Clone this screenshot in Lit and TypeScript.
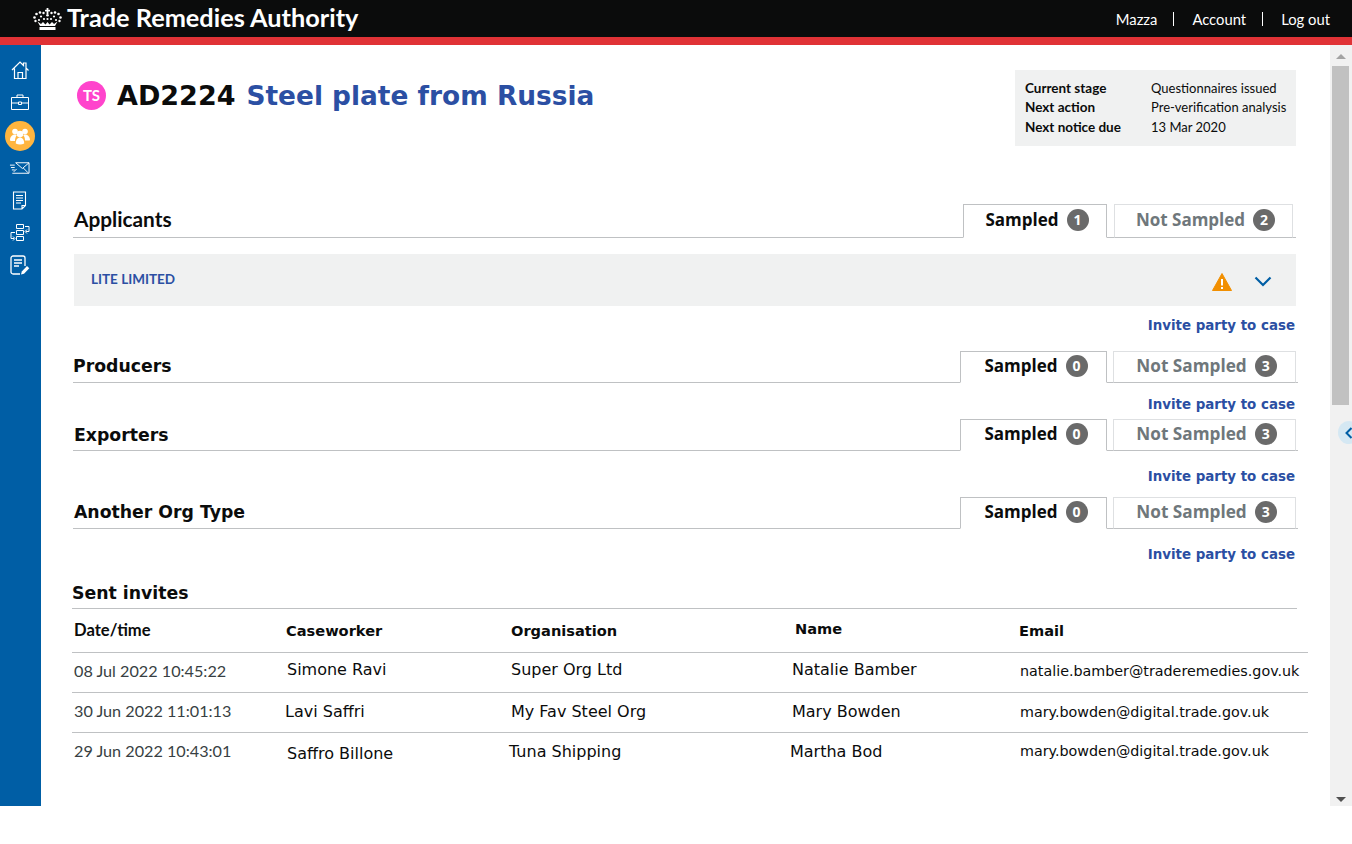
import { LitElement, html, css, svg, unsafeCSS } from 'lit';
import { customElement } from 'lit/decorators.js';

const TRANSPORT = unsafeCSS(`Lato, "Noto Sans", sans-serif`);

const home = svg`<path d="M2 10.500 10 2.500l3.500 3.500V3.500h2.500V8.500L18.500 11M4.500 9v10h11.500V9M8 19v-6h4.500v6" fill="none" stroke="#fff" stroke-width="1.200"/>`;
const briefcase = svg`<path d="M1.500 5.500h17v12h-17zM1.500 11h7M11.500 11h7M7 5.500V3h6v2.500M8.500 10h3v2.500h-3z" fill="none" stroke="#fff" stroke-width="1"/>`;
const people = svg`<g fill="#fff"><circle cx="6" cy="5.500" r="2.800"/><circle cx="16" cy="5.500" r="2.800"/><circle cx="11" cy="8" r="3.300"/><path d="M1 14c0-3 2-5.500 5-5.500 1 0 1.500.3 1.800.6C6.500 11 6 13 6 15H1.500zM21 14c0-3-2-5.500-5-5.500-1 0-1.500.3-1.800.6 1.300 1.400 1.800 3.400 1.800 5.400h4.500zM6.800 17.500c0-3.800 1.800-6 4.200-6s4.200 2.200 4.200 6c-2.500 1.200-5.900 1.200-8.400 0z"/></g>`;
const mail = svg`<path d="M7 1.500h14v11H3.500M7 1.500l7 6 7-6M8 8l-3 3M20 12l-5-5M1 4h5M2 6.500h4M3 9h3" fill="none" stroke="#fff" stroke-width="1"/>`;
const doc = svg`<path d="M1.500 1h12v13.500L10 18H1.500zM13.500 14.500H10V18M4 4.500h7M4 7h7M4 9.500h7M4 12h5" fill="none" stroke="#fff" stroke-width="1.100"/>`;
const flow = svg`<path d="M7.500 1h7v4h-7zM7.500 7h7v4h-7zM7.500 13h7v4h-7zM16 3h4v5h-3M18 6l-2 2 2 2M6 9H2v6h3M4 13l2 2-2 2" fill="none" stroke="#fff" stroke-width="1"/>`;
const note = svg`<path d="M10 19H3c-1 0-2-1-2-2V3c0-1 1-2 2-2h10c1 0 2 1 2 2v8M4 5h8M4 8h8M4 11h5" fill="none" stroke="#fff" stroke-width="1.300"/><path d="M11 19.500l.8-3 5.200-5.500 2.300 2.300-5.300 5.400z" fill="#fff"/>`;

const navIcons = [
  { art: home, w: 20, h: 22, box: '0 0 20 21', cls: 'n-home' },
  { art: briefcase, w: 20, h: 20, box: '0 0 20 20', cls: 'n-case' },
  { art: people, w: 22, h: 20, box: '0 0 22 20', cls: 'n-people' },
  { art: mail, w: 21, h: 14, box: '0 0 22 14', cls: 'n-mail' },
  { art: doc, w: 15, h: 19, box: '0 0 15 19', cls: 'n-doc' },
  { art: flow, w: 21, h: 20, box: '0 0 21 19', cls: 'n-flow' },
  { art: note, w: 20, h: 20, box: '0 0 20 20', cls: 'n-note' },
];

const groups = [
  { title: 'Applicants', sampled: 1, not: 2, cls: 'applicants', expanded: true },
  { title: 'Producers', sampled: 0, not: 3, cls: 'producers' },
  { title: 'Exporters', sampled: 0, not: 3, cls: 'exporters' },
  { title: 'Another Org Type', sampled: 0, not: 3, cls: 'another' },
];

// text, then the small x / y nudge each cell has in the original table
const invites = [
  [['08 Jul 2022 10:45:22', 1, -2], ['Simone Ravi', 1, -3], ['Super Org Ltd', 0, -3], ['Natalie Bamber', -3, -3], ['natalie.bamber@traderemedies.gov.uk', 1, -2]],
  [['30 Jun 2022 11:01:13', 1, -2], ['Lavi Saffri', -1, -1], ['My Fav Steel Org', 0, -1], ['Mary Bowden', -3, -1], ['mary.bowden@digital.trade.gov.uk', 1, -1]],
  [['29 Jun 2022 10:43:01', 1, -3], ['Saffro Billone', 1, 0], ['Tuna Shipping', -2, -2], ['Martha Bod', -5, -2], ['mary.bowden@digital.trade.gov.uk', 1, -2]],
] as [string, number, number][][];

@customElement('app-root')
export class AppRoot extends LitElement {
  static styles = css`
    :host {
      display: block;
      height: 806px;
      background: #fff;
      color: #0b0c0c;
      font-family: "DejaVu Sans", sans-serif;
    }
    .topbar {
      height: 37px;
      background: #0b0c0c;
      border-bottom: 8px solid #e03236;
      display: flex;
      align-items: center;
      justify-content: space-between;
      padding: 0 22px 0 33px;
      color: #fff;
      font-family: ${TRANSPORT};
    }
    .brand {
      display: flex;
      align-items: center;
      gap: 5px;
      font-size: 25.300px;
      font-weight: 700;
    }
    .brand span { padding-bottom: 3px; }
    .user {
      display: flex;
      align-items: center;
      font-size: 14.800px;
    }
    .user span + span {
      border-left: 1px solid #fff;
      margin-left: 16px;
      padding-left: 18px;
      line-height: 14px;
    }
    .layout {
      display: flex;
      height: 761px;
      position: relative;
    }
    .sidenav {
      width: 41px;
      flex: none;
      background: #005ea5;
      display: flex;
      flex-direction: column;
      align-items: center;
      padding-top: 14px;
      box-sizing: border-box;
    }
    .sidenav div {
      display: flex;
      align-items: center;
      justify-content: center;
      width: 30px;
      height: 22px;
      margin-left: -2px;
    }
    .sidenav .n-case { margin-top: 10px; }
    .sidenav .n-people {
      width: 30px;
      height: 30px;
      margin-top: 8px;
      border-radius: 50%;
      background: #ffb53f;
    }
    .sidenav .n-mail { margin-top: 9px; height: 16px; }
    .sidenav .n-doc { margin-top: 13px; }
    .sidenav .n-flow { margin-top: 11px; }
    .sidenav .n-note { margin-top: 10px; }
    main {
      flex: 1;
      min-width: 0;
      padding: 25px 22px 0 32px;
      box-sizing: border-box;
    }
    .case-head {
      display: flex;
      justify-content: space-between;
      align-items: flex-start;
      margin-left: 1px;
      margin-right: 12px;
      height: 133px;
    }
    .title {
      display: flex;
      align-items: center;
      margin: 9px 0 0 3px;
      font-size: 27px;
      font-weight: 700;
      line-height: 33px;
    }
    .ts {
      width: 29px;
      height: 29px;
      border-radius: 50%;
      background: #ff44cc;
      color: #fff;
      font-family: ${TRANSPORT};
      font-size: 15px;
      font-weight: 700;
      line-height: 29px;
      text-align: center;
      margin-right: 11px;
    }
    .title em {
      font-style: normal;
      font-size: 26.400px;
      color: #2b4fa3;
      margin-left: 11px;
    }
    .stage {
      width: 281px;
      height: 76px;
      background: #f0f1f1;
      box-sizing: border-box;
      padding: 8px 0 0 10px;
      display: grid;
      grid-template-columns: 126px 1fr;
      grid-auto-rows: 19.500px;
      align-items: center;
      font-family: ${TRANSPORT};
      font-size: 13px;
    }
    .stage b { font-weight: 700; font-size: 13.500px; }
    .group-head {
      display: flex;
      justify-content: space-between;
      align-items: flex-end;
      border-bottom: 1px solid #bfc1c3;
      margin-right: 12px;
      height: 34px;
    }
    .producers .group-head,
    .exporters .group-head,
    .another .group-head {
      height: 32px;
      margin-right: 10px;
    }
    h2 {
      margin: 0 0 4px 1px;
      font-size: 17.300px;
      line-height: 24px;
      font-weight: 700;
    }
    .applicants h2 {
      font-family: ${TRANSPORT};
      font-size: 20.800px;
      margin-bottom: 6px;
    }
    .producers h2 { margin-left: 0; }
    .exporters h2 { margin-bottom: 3px; margin-left: 1px; }
    .tabs {
      display: flex;
      gap: 6px;
      margin: 0 2px -1px 0;
      font-family: "Open Sans", sans-serif;
      font-size: 17px;
      font-weight: 700;
    }
    .applicants .tabs { gap: 7px; margin-right: 0; }
    .tab {
      display: flex;
      align-items: center;
      justify-content: center;
      gap: 8px;
      height: 32px;
      padding: 0 0 3px 4px;
      box-sizing: border-box;
      border: 1px solid #dee0e2;
      border-bottom-color: #bfc1c3;
      color: #6f777b;
      background: #fff;
    }
    .tab.on {
      width: 147px;
      padding-left: 5px;
      color: #0b0c0c;
      border-color: #bfc1c3;
      border-bottom-color: #fff;
    }
    .tab.off { width: 183px; font-size: 17.200px; }
    .applicants .tab.on { width: 144px; height: 34px; padding-left: 4px; }
    .applicants .tab.off { width: 179px; height: 34px; margin-right: 3px; font-size: 17px; }
    .count {
      width: 22px;
      height: 22px;
      border-radius: 50%;
      background: #6a6a6a;
      color: #fff;
      font-size: 14px;
      line-height: 22px;
      text-align: center;
    }
    .org {
      height: 52px;
      margin: 16px 12px 0 1px;
      background: #f0f1f1;
      display: flex;
      align-items: center;
      justify-content: space-between;
      padding: 0 24px 0 17px;
      color: #2b4fa3;
      font-family: ${TRANSPORT};
      font-size: 13.500px;
      font-weight: 700;
    }
    .org > span { padding-bottom: 2px; }
    .org-icons {
      display: flex;
      align-items: center;
      gap: 22px;
      padding-top: 3px;
    }
    .invite {
      text-align: right;
      margin-right: 13px;
      font-size: 13.400px;
      line-height: 16px;
      font-weight: 700;
      color: #2b4fa3;
      padding-top: 14px;
      height: 21px;
    }
    .applicants .invite { padding-top: 12px; height: 32px; }
    .producers .invite { padding-top: 14px; height: 21px; }
    .exporters .invite { padding-top: 18px; height: 27px; }
    .another .invite { padding-top: 18px; }
    .sent {
      margin-top: 13px;
      margin-left: -1px;
    }
    .sent h2 {
      margin: 0 11px 0 0;
      padding-bottom: 3px;
      border-bottom: 1px solid #bfc1c3;
      line-height: 24px;
    }
    .row {
      display: grid;
      grid-template-columns: 213px 225px 284px 224px 1fr;
      align-items: center;
      height: 40px;
      box-sizing: border-box;
      border-bottom: 1px solid #bfc1c3;
      padding-left: 1px;
      font-size: 16px;
    }
    .row:last-child { border-bottom: 0; }
    .row.headings {
      height: 44px;
      font-size: 14.600px;
      font-weight: 700;
    }
    .row .when {
      font-family: ${TRANSPORT};
      font-size: 16.200px;
      color: #383f43;
    }
    .row .mail { font-size: 14.300px; }
    .row.headings .when {
      color: #0b0c0c;
      font-weight: 700;
      font-size: 16.600px;
      padding-bottom: 2px;
      margin-left: 1px;
    }
    .row.headings .h-name { padding-bottom: 4px; }
    .rail {
      width: 22px;
      flex: none;
      background: #f1f1f1;
      display: flex;
      flex-direction: column;
      align-items: center;
    }
    .arrow {
      width: 0;
      height: 0;
      border-left: 5px solid transparent;
      border-right: 5px solid transparent;
      margin: 9px 0 7px;
    }
    .arrow.up { border-bottom: 5px solid #a3a3a3; }
    .arrow.down { border-top: 5px solid #505050; margin: 0 0 4px; }
    .thumb {
      width: 17px;
      height: 339px;
      background: #c1c1c1;
      margin-left: -2px;
    }
    .rail-space { flex: 1; }
    .handle {
      position: absolute;
      right: -8px;
      top: 376px;
      width: 22px;
      height: 23px;
      border-radius: 50%;
      background: #d5e8f3;
      display: flex;
      align-items: center;
      justify-content: center;
    }
  `;

  renderGroup(g: typeof groups[number]) {
    return html`<section class=${g.cls}>
      <div class="group-head">
        <h2>${g.title}</h2>
        <div class="tabs">
          <div class="tab on">Sampled <span class="count">${g.sampled}</span></div>
          <div class="tab off">Not Sampled <span class="count">${g.not}</span></div>
        </div>
      </div>
      ${g.expanded
        ? html`<div class="org">
            <span>LITE LIMITED</span>
            <div class="org-icons">
              <svg width="20" height="18" viewBox="0 0 20 18">
                <path d="M10 0.500 19.500 17.500H.5z" fill="#f18f01" stroke="#f18f01" stroke-linejoin="round"/>
                <path d="M10 6v6.500M10 14v2" stroke="#fff" stroke-width="2"/>
              </svg>
              <svg width="18" height="11" viewBox="0 0 18 11">
                <path d="M1.500 1.500 9 9l7.500-7.500" fill="none" stroke="#005ea5" stroke-width="2.200"/>
              </svg>
            </div>
          </div>`
        : null}
      <div class="invite">Invite party to case</div>
    </section>`;
  }

  render() {
    return html`
      <div class="topbar">
        <div class="brand">
          <svg width="29" height="22" viewBox="0 0 29 22">
            <g fill="#fff">
              <rect x="13.600" y="0" width="1.800" height="6"/><rect x="12" y="1.800" width="5" height="1.600"/>
              <circle cx="14.500" cy="7.200" r="1.300"/>
              <circle cx="10.500" cy="5" r="1.200"/><circle cx="18.500" cy="5" r="1.200"/>
              <circle cx="7" cy="4.500" r="1.300"/><circle cx="22" cy="4.500" r="1.300"/>
              <circle cx="3.500" cy="6" r="1.300"/><circle cx="25.500" cy="6" r="1.300"/>
              <circle cx="1.500" cy="9.500" r="1.300"/><circle cx="27.500" cy="9.500" r="1.300"/>
              <circle cx="2.500" cy="13" r="1.200"/><circle cx="26.500" cy="13" r="1.200"/>
              <circle cx="8" cy="8.500" r="1.100"/><circle cx="21" cy="8.500" r="1.100"/>
              <circle cx="11" cy="11" r="1.100"/><circle cx="18" cy="11" r="1.100"/><circle cx="14.500" cy="11" r="1.100"/>
              <circle cx="6" cy="12" r="1.100"/><circle cx="23" cy="12" r="1.100"/>
              <path d="M4.500 13.500 7 18h15l2.500-4.500L21 16l-2-2-2.500 2.500-2-2.500-2 2.500L10 14l-2 2z"/>
              <rect x="6.500" y="19" width="16" height="3"/>
            </g>
          </svg>
          <span>Trade Remedies Authority</span>
        </div>
        <div class="user"><span>Mazza</span><span>Account</span><span>Log out</span></div>
      </div>
      <div class="layout">
        <nav class="sidenav">
          ${navIcons.map(
            (n) => html`<div class=${n.cls}><svg width=${n.w} height=${n.h} viewBox=${n.box}>${n.art}</svg></div>`,
          )}
        </nav>
        <main>
          <div class="case-head">
            <div class="title"><span class="ts">TS</span>AD2224 <em>Steel plate from Russia</em></div>
            <div class="stage">
              <b>Current stage</b><span>Questionnaires issued</span>
              <b>Next action</b><span>Pre-verification analysis</span>
              <b>Next notice due</b><span>13 Mar 2020</span>
            </div>
          </div>
          ${groups.map((g) => this.renderGroup(g))}
          <section class="sent">
            <h2>Sent invites</h2>
            <div class="row headings">
              <span class="when">Date/time</span><span>Caseworker</span><span>Organisation</span><span class="h-name">Name</span><span>Email</span>
            </div>
            ${invites.map(
              (r) => html`<div class="row">
                ${r.map(
                  ([text, dx, dy], i) =>
                    html`<span class=${i === 0 ? 'when' : i === 4 ? 'mail' : ''} style="margin:${dy * 2}px 0 0 ${dx}px">${text}</span>`,
                )}
              </div>`,
            )}
          </section>
        </main>
        <div class="rail">
          <div class="arrow up"></div>
          <div class="thumb"></div>
          <div class="rail-space"></div>
          <div class="arrow down"></div>
        </div>
        <div class="handle">
          <svg width="8" height="12" viewBox="0 0 8 12"><path d="M6.500 1 1.500 6l5 5" fill="none" stroke="#005ea5" stroke-width="2"/></svg>
        </div>
      </div>
    `;
  }
}
